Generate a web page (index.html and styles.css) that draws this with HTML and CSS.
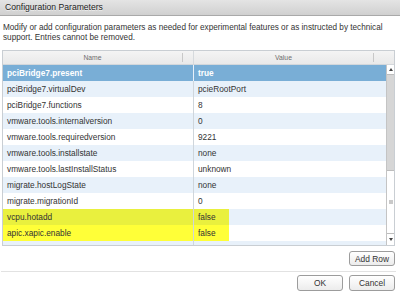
FILE: index.html
```html
<!DOCTYPE html>
<html>
<head lang="en">
    <meta charset="UTF-8">
    <title>Configuration Parameters</title>
    <link rel="stylesheet" href="styles.css">
</head>
<body>
<div id="dialog">
    <div class="titlebar">Configuration Parameters</div>
    <p class="intro">Modify or add configuration parameters as needed for experimental features or as instructed by technical support. Entries cannot be removed.</p>
    <div id="grid">
        <div class="head">
            <div class="hcell hname"><span>Name</span><i></i></div>
            <div class="hcell hvalue"><span>Value</span><i></i></div>
        </div>
        <div class="body">
            <div class="rows">
                <div class="row selected"><div class="c cname">pciBridge7.present</div><div class="c cvalue">true</div></div>
                <div class="row"><div class="c cname">pciBridge7.virtualDev</div><div class="c cvalue">pcieRootPort</div></div>
                <div class="row"><div class="c cname">pciBridge7.functions</div><div class="c cvalue">8</div></div>
                <div class="row"><div class="c cname">vmware.tools.internalversion</div><div class="c cvalue">0</div></div>
                <div class="row"><div class="c cname">vmware.tools.requiredversion</div><div class="c cvalue">9221</div></div>
                <div class="row"><div class="c cname">vmware.tools.installstate</div><div class="c cvalue">none</div></div>
                <div class="row"><div class="c cname">vmware.tools.lastInstallStatus</div><div class="c cvalue">unknown</div></div>
                <div class="row"><div class="c cname">migrate.hostLogState</div><div class="c cvalue">none</div></div>
                <div class="row"><div class="c cname">migrate.migrationId</div><div class="c cvalue">0</div></div>
                <div class="row mark"><div class="c cname">vcpu.hotadd</div><div class="c cvalue">false</div></div>
                <div class="row mark"><div class="c cname">apic.xapic.enable</div><div class="c cvalue">false</div></div>
                <div class="row"><div class="c cname"></div><div class="c cvalue"></div></div>
            </div>
            <div class="scroll">
                <div class="arrow up"></div>
                <div class="track"></div>
                <div class="thumb"><span class="grip"></span></div>
                <div class="arrow down"></div>
            </div>
        </div>
    </div>
    <div class="addbar"><button class="btn">Add Row</button></div>
    <div class="footer">
        <button class="btn">OK</button>
        <button class="btn">Cancel</button>
    </div>
</div>
</body>
</html>
```

FILE: styles.css
```css
*{
    margin: 0;
    padding: 0;
    box-sizing: border-box;
}
body{
    width: 400px;
    height: 295px;
    background: #ffffff;
    font-family: "Liberation Sans", Arial, sans-serif;
    color: #333333;
    overflow: hidden;
}
#dialog{
    display: flex;
    flex-direction: column;
}
.titlebar{
    height: 16px;
    line-height: 15px;
    padding-left: 5px;
    font-size: 8.6px;
    color: #222222;
    text-shadow: 0 1px 0 #eeeeee;
    background: linear-gradient(#e4e4e4, #d0d0d0);
    border-bottom: 1px solid #a9a9a9;
}
.intro{
    margin: 7px 4px 7px 3px;
    font-size: 8.2px;
    line-height: 10px;
    color: #333333;
}
#grid{
    width: 393px;
    margin-left: 2px;
    border: 1px solid #c9ced3;
}
.head{
    display: flex;
    height: 14px;
    background: linear-gradient(#f4f4f4, #e9e9e9);
    border-bottom: 1px solid #d3d7db;
}
.hcell{
    display: flex;
    align-items: center;
    font-size: 6.8px;
    color: #6e6e6e;
}
.hcell span{
    flex: 1;
    text-align: center;
}
.hcell i{
    height: 9px;
    border-left: 1px solid #c8c8c8;
}
.hname{
    width: 191px;
    border-right: 1px solid #d6dadd;
}
.hname i{
    width: 11px;
}
.hvalue{
    flex: 1;
}
.hvalue i{
    width: 21px;
}
.body{
    display: flex;
    height: 180px;
    overflow: hidden;
}
.rows{
    flex: 1;
}
.row{
    display: flex;
    height: 16px;
    line-height: 16px;
    font-size: 8.3px;
    color: #333333;
}
.row:nth-child(even){
    background: #e8f1fa;
}
.c{
    padding-left: 4px;
    white-space: nowrap;
}
.cname{
    width: 191px;
    border-right: 1px solid #cfd6dc;
}
.cvalue{
    flex: 1;
}
.row.selected{
    background: #79aed6;
    color: #ffffff;
    font-weight: bold;
}
.row.selected .cname{
    border-right-color: #e8f1fa;
}
.row.mark .cname{
    background: #ffff38;
}
.row.mark .cvalue{
    background: linear-gradient(to right, #ffff38 35px, transparent 35px);
}
.row.mark:nth-child(even) .cname{
    background: #e9f03e;
}
.row.mark:nth-child(even) .cvalue{
    background: linear-gradient(to right, #e9f03e 35px, transparent 35px);
}
.scroll{
    width: 8px;
    display: flex;
    flex-direction: column;
    border-left: 1px solid #c4c4c4;
}
.arrow{
    display: flex;
    align-items: center;
    justify-content: center;
    background: #ffffff;
}
.arrow.up{
    height: 10px;
    border-bottom: 1px solid #bdbdbd;
}
.arrow.up:after{
    content: "";
    border-left: 2px solid transparent;
    border-right: 2px solid transparent;
    border-bottom: 3px solid #444444;
}
.arrow.down{
    height: 12px;
    border-top: 1px solid #bdbdbd;
}
.arrow.down:after{
    content: "";
    border-left: 2px solid transparent;
    border-right: 2px solid transparent;
    border-top: 3px solid #444444;
}
.track{
    height: 95px;
    background: #d6d6d6;
}
.thumb{
    height: 63px;
    background: #ffffff;
    border-top: 1px solid #bdbdbd;
    display: flex;
    align-items: center;
    justify-content: center;
}
.grip{
    width: 4px;
    height: 4px;
    background: radial-gradient(circle, #8a8a8a 0.6px, transparent 0.8px) 0 0 / 2px 2px;
}
.addbar{
    display: flex;
    justify-content: flex-end;
    padding: 5px 5px 0 0;
}
.btn{
    width: 46px;
    height: 15px;
    font-family: "Liberation Sans", Arial, sans-serif;
    font-size: 8.4px;
    color: #333333;
    background: linear-gradient(#ffffff, #ececec);
    border: 1px solid #9c9c9c;
    border-radius: 3px;
}
.footer{
    display: flex;
    justify-content: flex-end;
    gap: 6px;
    margin: 5px 4px 0 1px;
    padding: 3px 1px 0 0;
    border-top: 1px solid #e2e2e2;
}
.footer .btn{
    height: 16px;
}
```
